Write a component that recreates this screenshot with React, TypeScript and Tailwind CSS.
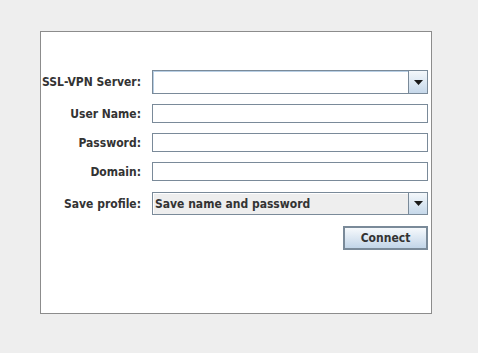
import React from "react";

const font = { fontFamily: '"DejaVu Sans Condensed", "DejaVu Sans", "Liberation Sans", sans-serif' };

function Arrow() {
  return (
    <svg width="9" height="5" viewBox="0 0 9 5" className="block">
      <path d="M0 0H9L4.5 5Z" fill="#1a1a1a" />
    </svg>
  );
}

function ArrowButton() {
  return (
    <div className="w-[19px] h-full flex items-center justify-center border-l border-[#7a8a99] bg-gradient-to-b from-[#f4f8fb] to-[#c6d8ea]">
      <Arrow />
    </div>
  );
}

function Label({ children }: { children: React.ReactNode }) {
  return (
    <div className="flex items-center justify-end text-[12px] font-bold text-[#333333] whitespace-nowrap">
      {children}
    </div>
  );
}

export default function App() {
  return (
    <div className="w-[478px] h-[353px] bg-[#eeeeee] pt-[31px] pl-[40px]" style={font}>
      <div className="w-[392px] h-[283px] bg-white border border-[#8c8c8c] pt-[38px] pl-[3px]">
        <div className="grid grid-cols-[97px_276px] gap-x-[11px]">
          <Label>SSL-VPN Server:</Label>
          <div className="h-[24px] flex border border-[#7a8a99] bg-white">
            <div className="flex-1 border-t border-l border-[#b8cfe5]" />
            <ArrowButton />
          </div>

          <div className="col-span-2 h-[10px]" />
          <Label>User Name:</Label>
          <div className="h-[19px] border border-[#7a8a99] bg-white" />

          <div className="col-span-2 h-[10px]" />
          <Label>Password:</Label>
          <div className="h-[19px] border border-[#7a8a99] bg-white" />

          <div className="col-span-2 h-[10px]" />
          <Label>Domain:</Label>
          <div className="h-[19px] border border-[#7a8a99] bg-white" />

          <div className="col-span-2 h-[11px]" />
          <Label>Save profile:</Label>
          <div className="h-[23px] flex border border-[#7a8a99] bg-[#eeeeee]">
            <div className="flex-1 flex items-center pl-[1px] border-t border-l border-white text-[12px] font-bold text-[#333333]">
              Save name and password
            </div>
            <ArrowButton />
          </div>

          <div className="col-span-2 h-[11px]" />
          <div />
          <div className="flex justify-end">
            <button className="w-[85px] h-[24px] border-2 border-[#7a8a99] bg-gradient-to-b from-[#f6f9fc] to-[#c2d5e8] text-[12px] font-bold text-[#333333] flex items-center justify-center">
              Connect
            </button>
          </div>
        </div>
      </div>
    </div>
  );
}
